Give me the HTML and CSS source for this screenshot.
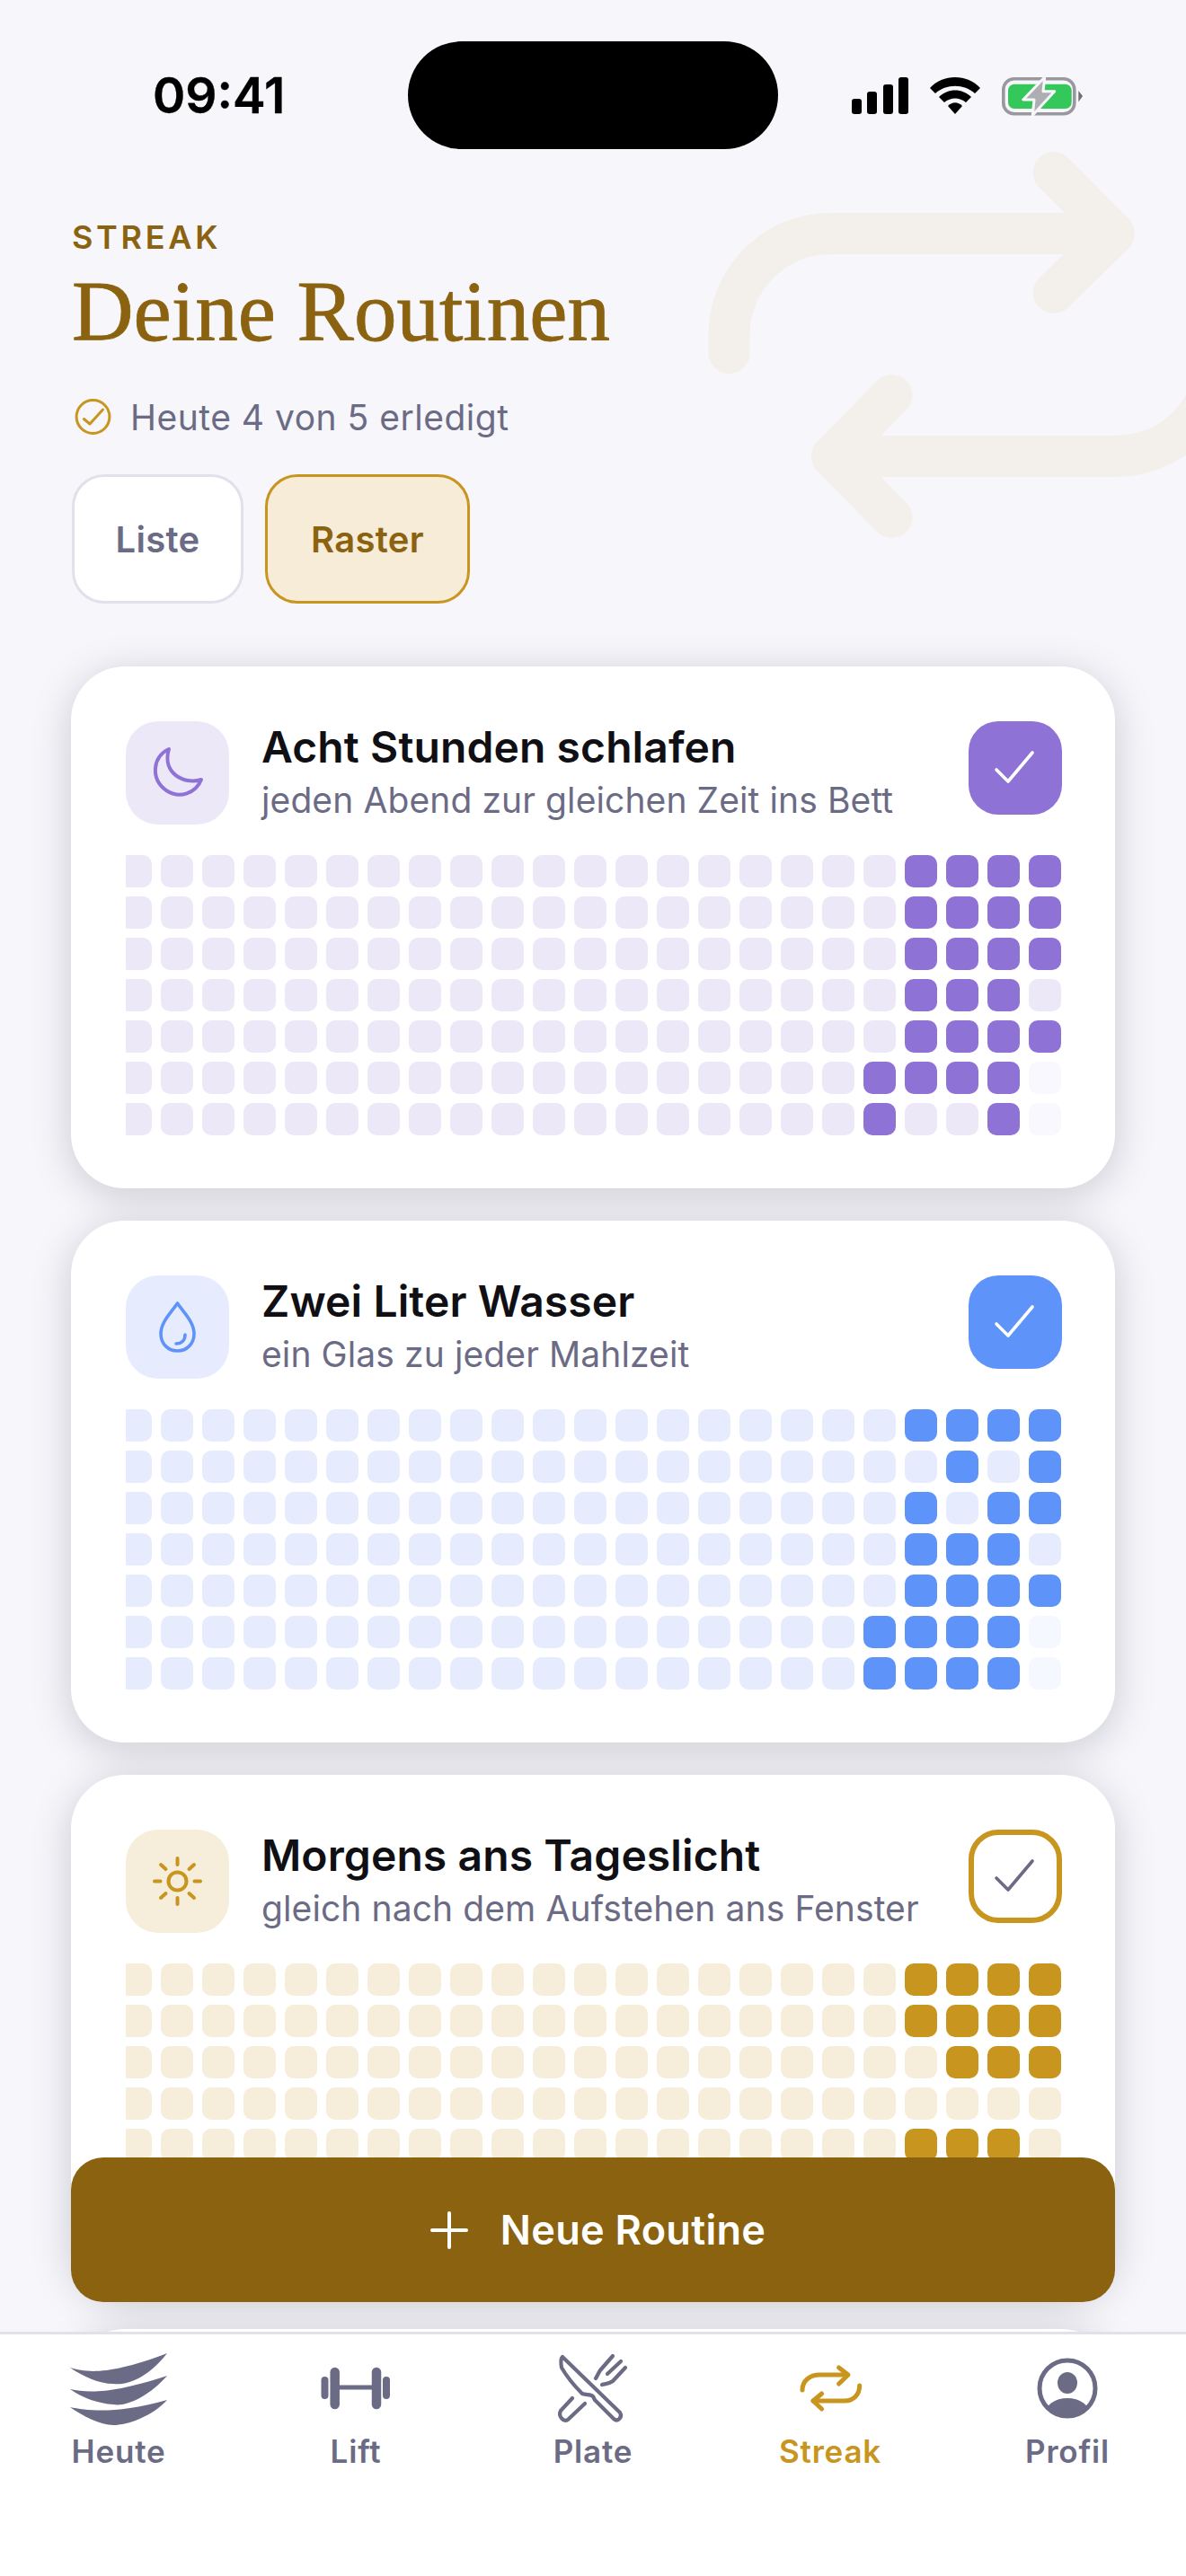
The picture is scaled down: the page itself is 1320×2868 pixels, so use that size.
FILE: index.html
```html
<!DOCTYPE html>
<html lang="de">
<head>
<meta charset="utf-8">
<title>Deine Routinen</title>
<link rel="stylesheet" href="styles.css">
</head>
<body>
<div class="app">
  <svg class="bg-icon" width="1320" height="640" viewBox="0 0 1320 640" fill="none" stroke="#F3F0EC" stroke-width="46" stroke-linecap="round" stroke-linejoin="round">
    <path d="M811.5 393V373A113 113 0 0 1 924.5 260H1238"/>
    <path d="M1172.6 192L1240 260L1172.6 326"/>
    <path d="M926 508H1242A113 113 0 0 0 1355 395V380"/>
    <path d="M992.5 440L926 508L992.5 576"/>
  </svg>

  <header class="status">
    <div class="time">09:41</div>
    <div class="island"></div>
    <div class="sys">
      <svg width="63" height="41" viewBox="0 0 63 41" fill="#000"><rect x="0" y="24" width="11" height="17" rx="3"/><rect x="17" y="16" width="11" height="25" rx="3"/><rect x="35" y="8" width="11" height="33" rx="3"/><rect x="52" y="0" width="11" height="41" rx="3"/></svg>
      <svg width="56" height="41" viewBox="0 0 56 41" fill="#000"><path d="M0 12C14-4 42-4 56 12L50 18C38 7 18 7 6 18Z"/><path d="M10 22C20 12 36 12 46 22L40 28C33 22 23 22 16 28Z"/><path d="M20 32C25 27 31 27 36 32L28 41Z"/></svg>
      <svg width="106" height="70" viewBox="14 0 106 70"><rect x="15.8" y="16.8" width="79" height="39" rx="12" fill="none" stroke="#98989D" stroke-width="3.6"/><rect x="21" y="22.7" width="70.7" height="27.3" rx="7" fill="#34C759"/><path d="M99.3 30L104 36L99.3 42.6Z" fill="#6E6E73"/><path d="M61.7 15L37.7 40H50L48.3 57.3L72.7 30.7H60Z" fill="#AEAEB2" stroke="#F6F6FB" stroke-width="3" stroke-linejoin="round"/></svg>
    </div>
  </header>

  <section class="intro">
    <div class="eyebrow">STREAK</div>
    <h1 class="title">Deine Routinen</h1>
    <div class="progress">
      <svg width="41" height="40" viewBox="0 0 41 40" fill="none" stroke="#C8951E"><circle cx="20.5" cy="20" r="18.4" stroke-width="3"/><path d="M10.4 22.5L17 28L31.5 12" stroke-width="3" stroke-linecap="round" stroke-linejoin="round"/></svg>
      <span>Heute 4 von 5 erledigt</span>
    </div>
    <div class="views">
      <button class="view">Liste</button>
      <button class="view active">Raster</button>
    </div>
  </section>

  <main class="cards">
    <article class="card sleep">
      <div class="head">
        <div class="badge"><svg width="115" height="115" viewBox="0 0 115 115" fill="none" stroke="#8F72D6" stroke-width="4" stroke-linejoin="round"><path d="M48 31C30 39 27 64 45 77C60 87 78 80 84 65C65 71 40 58 48 31Z"/></svg></div>
        <div class="copy"><h2>Acht Stunden schlafen</h2><p>jeden Abend zur gleichen Zeit ins Bett</p></div>
        <button class="check done"><svg width="104" height="104" viewBox="0 0 104 104" fill="none" stroke="#fff" stroke-width="3.6" stroke-linecap="round" stroke-linejoin="round"><path d="M31 54L44 67L71 35"/></svg></button>
      </div>
      <div class="grid">
        <i></i><i></i><i></i><i></i><i></i><i></i><i></i><i></i><i></i><i></i><i></i><i></i><i></i><i></i><i></i><i></i><i></i><i></i><i></i><i class="on"></i><i class="on"></i><i class="on"></i><i class="on"></i>
        <i></i><i></i><i></i><i></i><i></i><i></i><i></i><i></i><i></i><i></i><i></i><i></i><i></i><i></i><i></i><i></i><i></i><i></i><i></i><i class="on"></i><i class="on"></i><i class="on"></i><i class="on"></i>
        <i></i><i></i><i></i><i></i><i></i><i></i><i></i><i></i><i></i><i></i><i></i><i></i><i></i><i></i><i></i><i></i><i></i><i></i><i></i><i class="on"></i><i class="on"></i><i class="on"></i><i class="on"></i>
        <i></i><i></i><i></i><i></i><i></i><i></i><i></i><i></i><i></i><i></i><i></i><i></i><i></i><i></i><i></i><i></i><i></i><i></i><i></i><i class="on"></i><i class="on"></i><i class="on"></i><i></i>
        <i></i><i></i><i></i><i></i><i></i><i></i><i></i><i></i><i></i><i></i><i></i><i></i><i></i><i></i><i></i><i></i><i></i><i></i><i></i><i class="on"></i><i class="on"></i><i class="on"></i><i class="on"></i>
        <i></i><i></i><i></i><i></i><i></i><i></i><i></i><i></i><i></i><i></i><i></i><i></i><i></i><i></i><i></i><i></i><i></i><i></i><i class="on"></i><i class="on"></i><i class="on"></i><i class="on"></i><i class="dim"></i>
        <i></i><i></i><i></i><i></i><i></i><i></i><i></i><i></i><i></i><i></i><i></i><i></i><i></i><i></i><i></i><i></i><i></i><i></i><i class="on"></i><i></i><i></i><i class="on"></i><i class="dim"></i>
      </div>
    </article>

    <article class="card water">
      <div class="head">
        <div class="badge"><svg width="115" height="115" viewBox="0 0 115 115" fill="none" stroke="#5E93FA" stroke-width="3.6" stroke-linecap="round" stroke-linejoin="round"><path d="M57.5 31C50 42 39 52 39 65C39 76 47 84 57.5 84C68 84 76 76 76 65C76 52 65 42 57.5 31Z"/><path d="M66 66C66 72 62 76 56 76"/></svg></div>
        <div class="copy"><h2>Zwei Liter Wasser</h2><p>ein Glas zu jeder Mahlzeit</p></div>
        <button class="check done"><svg width="104" height="104" viewBox="0 0 104 104" fill="none" stroke="#fff" stroke-width="3.6" stroke-linecap="round" stroke-linejoin="round"><path d="M31 54L44 67L71 35"/></svg></button>
      </div>
      <div class="grid">
        <i></i><i></i><i></i><i></i><i></i><i></i><i></i><i></i><i></i><i></i><i></i><i></i><i></i><i></i><i></i><i></i><i></i><i></i><i></i><i class="on"></i><i class="on"></i><i class="on"></i><i class="on"></i>
        <i></i><i></i><i></i><i></i><i></i><i></i><i></i><i></i><i></i><i></i><i></i><i></i><i></i><i></i><i></i><i></i><i></i><i></i><i></i><i></i><i class="on"></i><i></i><i class="on"></i>
        <i></i><i></i><i></i><i></i><i></i><i></i><i></i><i></i><i></i><i></i><i></i><i></i><i></i><i></i><i></i><i></i><i></i><i></i><i></i><i class="on"></i><i></i><i class="on"></i><i class="on"></i>
        <i></i><i></i><i></i><i></i><i></i><i></i><i></i><i></i><i></i><i></i><i></i><i></i><i></i><i></i><i></i><i></i><i></i><i></i><i></i><i class="on"></i><i class="on"></i><i class="on"></i><i></i>
        <i></i><i></i><i></i><i></i><i></i><i></i><i></i><i></i><i></i><i></i><i></i><i></i><i></i><i></i><i></i><i></i><i></i><i></i><i></i><i class="on"></i><i class="on"></i><i class="on"></i><i class="on"></i>
        <i></i><i></i><i></i><i></i><i></i><i></i><i></i><i></i><i></i><i></i><i></i><i></i><i></i><i></i><i></i><i></i><i></i><i></i><i class="on"></i><i class="on"></i><i class="on"></i><i class="on"></i><i class="dim"></i>
        <i></i><i></i><i></i><i></i><i></i><i></i><i></i><i></i><i></i><i></i><i></i><i></i><i></i><i></i><i></i><i></i><i></i><i></i><i class="on"></i><i class="on"></i><i class="on"></i><i class="on"></i><i class="dim"></i>
      </div>
    </article>

    <article class="card light">
      <div class="head">
        <div class="badge"><svg width="115" height="115" viewBox="0 0 115 115" fill="none" stroke="#C8951E" stroke-width="4" stroke-linecap="round"><circle cx="57.5" cy="57.5" r="10"/><path d="M57.5 32V39M57.5 76V83M32 57.5H38.500M76.500 57.500H83M39 39L44.500 44M76 39L70.500 44M39 76L44.500 71M76 76L70.500 71"/></svg></div>
        <div class="copy"><h2>Morgens ans Tageslicht</h2><p>gleich nach dem Aufstehen ans Fenster</p></div>
        <button class="check open"><svg width="92" height="92" viewBox="6 6 92 92" fill="none" stroke="#6B6B85" stroke-width="3.6" stroke-linecap="round" stroke-linejoin="round"><path d="M31 54L44 67L71 35"/></svg></button>
      </div>
      <div class="grid">
        <i></i><i></i><i></i><i></i><i></i><i></i><i></i><i></i><i></i><i></i><i></i><i></i><i></i><i></i><i></i><i></i><i></i><i></i><i></i><i class="on"></i><i class="on"></i><i class="on"></i><i class="on"></i>
        <i></i><i></i><i></i><i></i><i></i><i></i><i></i><i></i><i></i><i></i><i></i><i></i><i></i><i></i><i></i><i></i><i></i><i></i><i></i><i class="on"></i><i class="on"></i><i class="on"></i><i class="on"></i>
        <i></i><i></i><i></i><i></i><i></i><i></i><i></i><i></i><i></i><i></i><i></i><i></i><i></i><i></i><i></i><i></i><i></i><i></i><i></i><i></i><i class="on"></i><i class="on"></i><i class="on"></i>
        <i></i><i></i><i></i><i></i><i></i><i></i><i></i><i></i><i></i><i></i><i></i><i></i><i></i><i></i><i></i><i></i><i></i><i></i><i></i><i></i><i></i><i></i><i></i>
        <i></i><i></i><i></i><i></i><i></i><i></i><i></i><i></i><i></i><i></i><i></i><i></i><i></i><i></i><i></i><i></i><i></i><i></i><i></i><i class="on"></i><i class="on"></i><i class="on"></i><i></i>
        <i></i><i></i><i></i><i></i><i></i><i></i><i></i><i></i><i></i><i></i><i></i><i></i><i></i><i></i><i></i><i></i><i></i><i></i><i></i><i></i><i></i><i></i><i></i>
        <i></i><i></i><i></i><i></i><i></i><i></i><i></i><i></i><i></i><i></i><i></i><i></i><i></i><i></i><i></i><i></i><i></i><i></i><i></i><i></i><i></i><i></i><i></i>
      </div>
    </article>

    <article class="card next"></article>
  </main>

  <button class="add">
    <svg width="42" height="42" viewBox="0 0 42 42" fill="none" stroke="#fff" stroke-width="4" stroke-linecap="round"><path d="M21 2V40M2 21H40"/></svg>
    <span>Neue Routine</span>
  </button>

  <nav class="tabs">
    <a class="tab">
      <svg width="120" height="100" viewBox="-10 0 120 100" fill="currentColor"><path d="M-4 28C16 34 41 36 104 12C81 42 56 48 44 46C28 46 11 38-4 28Z"/><path d="M-4 52C16 56 40 58 104 37C84 60 58 72 44 69C28 68 10 62-4 52Z"/><path d="M-4 72C16 76 48 80 104 64C88 82 60 92 44 92C30 92 10 82-4 72Z"/></svg>
      <span>Heute</span>
    </a>
    <a class="tab">
      <svg width="120" height="100" viewBox="-10 0 120 100" fill="none" stroke="currentColor" stroke-linecap="round"><path d="M15.500 42V59M84 42V59" stroke-width="8"/><path d="M26.700 33V69M73 33V69" stroke-width="10.500"/><path d="M30 50H70" stroke-width="5"/></svg>
      <span>Lift</span>
    </a>
    <a class="tab">
      <svg width="120" height="100" viewBox="-10 0 120 100" fill="none" stroke="currentColor" stroke-width="4.200" stroke-linecap="round" stroke-linejoin="round"><path d="M16 16L80 78C83 83 78 89 73 85L52 64L50 60C47 57 43 59 38 57C31 50 22 40 15 28C14 22 14 18 16 16Z"/><path d="M27 62L14 76C11 82 17 89 22 86L41 68"/><path d="M72 15L58 31C56 34 55 37 53 40M81 21L66 35M86 28L72 43C68 46 64 46 60 47"/></svg>
      <span>Plate</span>
    </a>
    <a class="tab current">
      <svg width="120" height="100" viewBox="-10 0 120 100" fill="none" stroke="currentColor" stroke-width="5" stroke-linecap="round" stroke-linejoin="round"><path d="M19 53C19 43 27 36 38.500 36H69"/><path d="M59.600 28L70 36L59.600 46"/><path d="M31 65H66C76 65 82.700 58 82.700 48"/><path d="M40.600 57L31 65L40.600 74"/></svg>
      <span>Streak</span>
    </a>
    <a class="tab">
      <svg width="120" height="100" viewBox="-10 0 120 100" fill="currentColor"><clipPath id="face"><circle cx="50" cy="51" r="31"/></clipPath><circle cx="50" cy="51" r="31" fill="none" stroke="currentColor" stroke-width="5"/><ellipse cx="50" cy="45" rx="11" ry="12"/><ellipse cx="50" cy="80" rx="25" ry="18" clip-path="url(#face)"/></svg>
      <span>Profil</span>
    </a>
  </nav>
</div>
</body>
</html>
```
FILE: styles.css
```css
* { box-sizing: border-box; }
html, body { margin: 0; padding: 0; }
body { font-family: Inter, "Noto Sans", sans-serif; background: #F6F6FB; }

.app {
  position: relative;
  width: 1320px;
  height: 2868px;
  overflow: hidden;
  background: #F6F6FB;
}
.bg-icon { position: absolute; left: 0; top: 0; }

/* status bar */
.status {
  position: relative;
  display: flex;
  align-items: center;
  height: 166px;
  padding: 46px 0 0 170px;
}
.time { width: 284px; font-size: 55px; font-weight: 600; color: #000; line-height: 120px; -webkit-text-stroke: 0.4px #000; }
.island { width: 412px; height: 120px; border-radius: 60px; background: #000; }
.sys { display: flex; align-items: center; margin-left: 82px; gap: 24px; }
.sys svg { display: block; }

/* intro */
.intro { position: relative; padding: 76px 0 0 80px; }
.eyebrow { font-size: 36px; line-height: 44px; font-weight: 600; letter-spacing: 3.700px; color: #8B6310; }
.title {
  margin: 7px 0 0;
  font-family: "Liberation Serif", serif;
  font-size: 95px;
  line-height: 108px;
  font-weight: 400;
  color: #8B6310;
  -webkit-text-stroke: 0.8px #8B6310;
}
.progress {
  display: flex;
  align-items: center;
  gap: 21px;
  margin: 39px 0 0 3px;
  height: 48px;
  font-size: 39px;
  letter-spacing: 0.500px;
  color: #6B6B85;
}
.views { display: flex; gap: 24px; margin-top: 40px; }
.view {
  height: 144px;
  border-radius: 36px;
  border: 3px solid #E2E0EA;
  background: #fff;
  padding: 0;
  width: 191px;
  font: 600 40px Inter, sans-serif;
  letter-spacing: 0.300px;
  color: #6B6B85;
}
.view.active {
  width: 228px;
  border-color: #C8951E;
  background: #F6ECD8;
  color: #8B6310;
}

/* cards */
.cards { display: flex; flex-direction: column; gap: 36px; padding: 70px 79px 0; }
.card {
  flex: none;
  height: 581px;
  padding: 61px 59px 59px 61px;
  border-radius: 60px;
  background: #fff;
  box-shadow: 0 8px 46px rgba(10, 10, 30, 0.18);
}
.head { display: flex; align-items: center; height: 115px; }
.badge { flex: none; width: 115px; height: 115px; border-radius: 36px; background: var(--off); }
.badge svg { display: block; }
.copy { flex: 1; min-width: 0; margin-left: 36px; padding-top: 2px; }
.copy h2 { margin: 0; font-size: 48px; line-height: 52px; font-weight: 600; letter-spacing: 0.100px; color: #101014; }
.copy p { margin: 7px 0 0; font-size: 39px; line-height: 52px; letter-spacing: 0.100px; color: #6B6B85; }
.check {
  flex: none;
  display: flex;
  align-items: center;
  justify-content: center;
  width: 104px;
  height: 104px;
  padding: 0;
  border: 0;
  border-radius: 33px;
  align-self: flex-start;
}
.check svg { display: block; }
.check.done { background: var(--on); }
.check.open { background: #fff; border: 6px solid #C8951E; }

.grid {
  display: grid;
  grid-template-columns: repeat(23, 36px);
  grid-auto-rows: 36px;
  gap: 10px;
  justify-content: end;
  overflow: hidden;
  margin: 34px 1px 0 0;
}
.grid i { display: block; border-radius: 10px; background: var(--off); }
.grid i.on { background: var(--on); }
.grid i.dim { background: var(--dim); }

.sleep { --on: #8F72D6; --off: #ECE8F8; --dim: #F9F8FE; }
.water { --on: #5E93FA; --off: #E6ECFD; --dim: #F5F8FF; }
.light { --on: #C8951E; --off: #F6EDDA; --dim: #FCF9F2; }

/* floating button */
.add {
  position: absolute;
  left: 79px;
  top: 2402px;
  width: 1162px;
  height: 161px;
  display: flex;
  align-items: center;
  justify-content: center;
  gap: 36px;
  padding: 0 0 0 11px;
  border: 0;
  border-radius: 36px;
  background: #8B6310;
  color: #fff;
  font: 600 45px Inter, sans-serif;
  letter-spacing: 0.300px;
}
.add svg { display: block; }

/* tab bar */
.tabs {
  position: absolute;
  left: 0;
  right: 0;
  bottom: 0;
  height: 272px;
  display: grid;
  grid-template-columns: repeat(5, 1fr);
  padding-top: 9px;
  border-top: 3px solid #E2E0EA;
  background: #fff;
}
.tab {
  display: flex;
  flex-direction: column;
  align-items: center;
  color: #6B6B85;
  font-size: 35px;
  line-height: 44px;
  font-weight: 600;
  letter-spacing: 0.800px;
}
.tab svg { display: block; }
.tab span { margin-top: -1px; }
.tab.current { color: #C8951E; }
```
